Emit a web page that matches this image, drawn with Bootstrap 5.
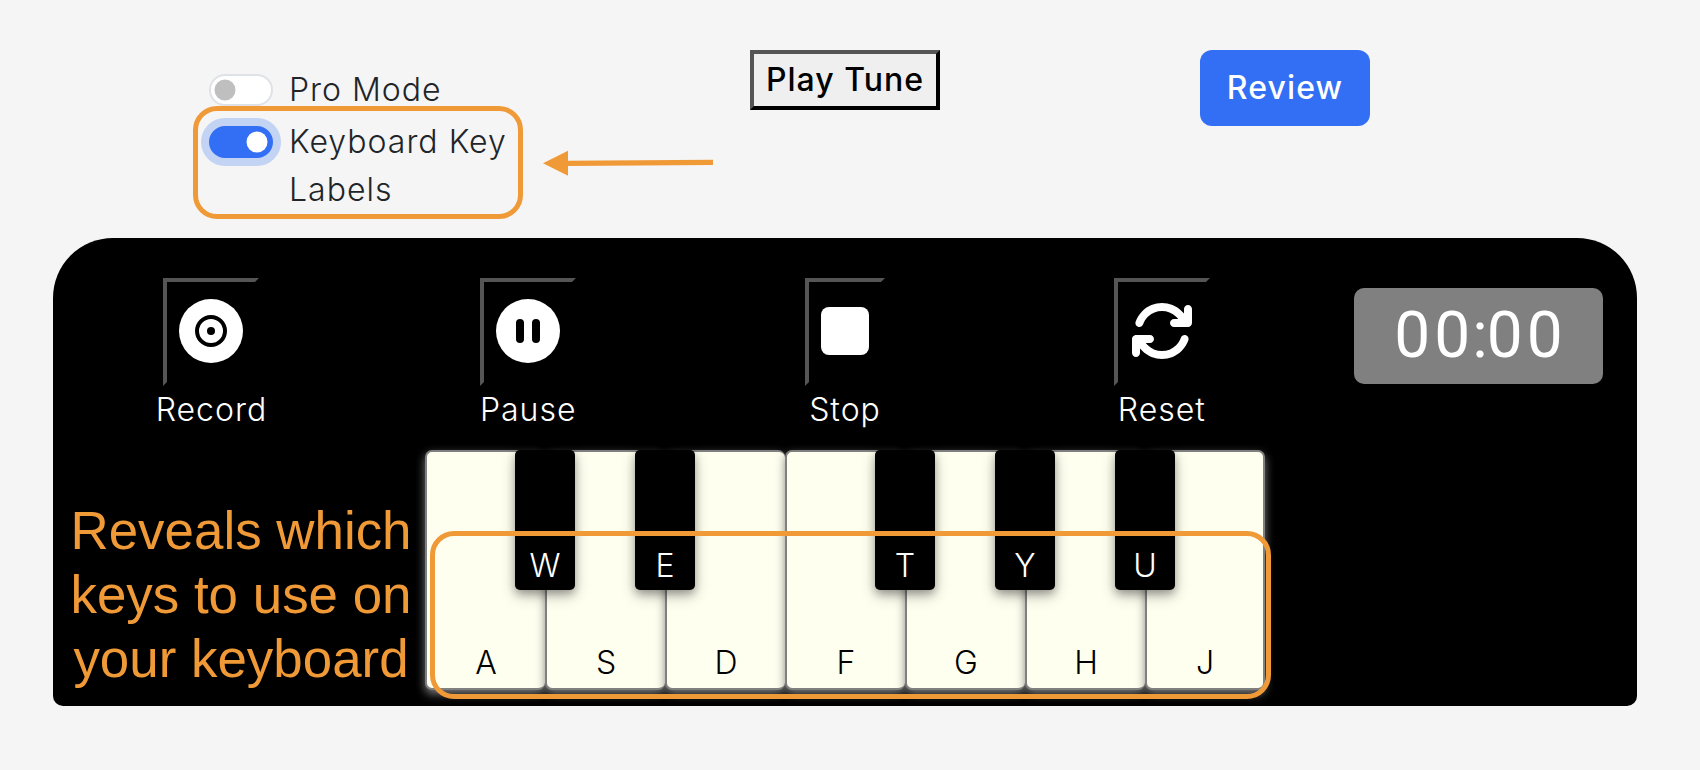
<!DOCTYPE html>
<html lang="en">
<head>
<meta charset="utf-8">
<title>Piano</title>
<link href="https://cdn.jsdelivr.net/npm/bootstrap@5.3.0/dist/css/bootstrap.min.css" rel="stylesheet">
<style>
body{background:#f5f5f5;font-family:Inter,"Noto Sans",sans-serif;font-size:32px;font-weight:300;line-height:48px;color:#212529;overflow:hidden}
.stage{width:1700px;height:770px;padding:50px 63px 0 53px}
.topbar{height:188px}
.options{width:320px;margin-left:156px;padding-top:16px}
.options .form-check{min-height:48px;margin-bottom:4px}
.options .form-check-label{white-space:nowrap;letter-spacing:1px}
.form-switch .form-check-input{border-width:2px}
.form-switch .form-check-input:not(:checked){border-color:#dee2e6}
.form-switch .form-check-input:checked{background-color:#326ff5;border-color:#326ff5}
.form-switch .form-check-input.ring{box-shadow:0 0 0 8px rgba(49,110,245,.25)}
.raised{border:4px solid;border-color:#555 #000 #000 #555;padding:0}
.tune{width:190px;height:60px;margin-left:221px;background:#efefef;color:#000;font-weight:500;line-height:46px;letter-spacing:1px}
.review{width:170px;height:76px;margin-left:260px;border-radius:12px;background:#326ff5;color:#fff;font-size:32px;font-weight:500;line-height:48px;border:0;letter-spacing:1.1px}
.device{width:1584px;height:468px;background:#000;color:#fff;border-radius:60px 60px 10px 10px;padding-top:40px}
.ctl{width:20%}
.ctl .raised{width:96px;height:108px;background:#000}
.ctl .raised svg{display:block;margin:-2px auto 0}
.ctl .raised.slim{width:80px}
.ctl .cap{line-height:48px;letter-spacing:1px}
.clock{width:249px;height:96px;margin-top:10px;background:#808080;border-radius:10px;font-family:Roboto,sans-serif;font-size:64px;font-weight:400;line-height:95px}
.clock span{display:inline-block;width:40px;text-align:center}
.clock .sep{width:12.5px}
.keys{width:840px;height:240px;margin:16px 0 0 372px}
.white{width:120px;height:240px;background:#fffff0;border:2px solid #808080;border-right-width:0;border-radius:7px;color:#000;font-weight:260;padding-bottom:1px;box-shadow:0 4px 10px rgba(128,128,128,.95)}
.white:last-child{border-right-width:2px}
.black{top:-2px;right:-30px;width:60px;height:140px;z-index:2;background:#000;color:#fff;border-radius:5px;box-shadow:0 4px 8px rgba(0,0,0,.3),0 6px 16px rgba(0,0,0,.2)}
.frame{border:5px solid #f09937;border-radius:24px;z-index:5}
.note{left:53px;top:499px;width:376px;color:#f09937;font:400 52.9px/64px "Liberation Sans",Arial,sans-serif;text-align:center}
</style>
</head>
<body>
<main class="stage position-relative">
  <header class="topbar d-flex align-items-start">
    <div class="options">
      <div class="form-check form-switch"><input class="form-check-input" type="checkbox" id="pro"><label class="form-check-label" for="pro">Pro Mode</label></div>
      <div class="form-check form-switch"><input class="form-check-input ring" type="checkbox" id="lab" checked><label class="form-check-label" for="lab">Keyboard Key<br>Labels</label></div>
    </div>
    <button class="raised tune">Play Tune</button>
    <button class="btn review">Review</button>
  </header>
  <section class="device">
    <div class="d-flex align-items-start">
      <div class="ctl d-flex flex-column align-items-center"><button class="raised"><svg width="64" height="64" viewBox="0 0 64 64"><circle cx="32" cy="32" r="32" fill="#fff"/><circle cx="32" cy="32" r="14" fill="none" stroke="#000" stroke-width="4"/><circle cx="32" cy="32" r="4"/></svg></button><span class="cap">Record</span></div>
      <div class="ctl d-flex flex-column align-items-center"><button class="raised"><svg width="64" height="64" viewBox="0 0 64 64"><circle cx="32" cy="32" r="32" fill="#fff"/><rect x="20" y="20" width="8" height="24" rx="4"/><rect x="36" y="20" width="8" height="24" rx="4"/></svg></button><span class="cap">Pause</span></div>
      <div class="ctl d-flex flex-column align-items-center"><button class="raised slim"><svg width="48" height="64" viewBox="0 0 48 64"><rect y="8" width="48" height="48" rx="8" fill="#fff"/></svg></button><span class="cap">Stop</span></div>
      <div class="ctl d-flex flex-column align-items-center"><button class="raised"><svg width="64" height="64" viewBox="0 0 512 512"><path fill="#fff" d="M105.1 202.6c7.7-21.8 20.2-42.3 37.8-59.8c62.5-62.5 163.8-62.5 226.3 0L386.3 160H352c-17.7 0-32 14.3-32 32s14.3 32 32 32H463.9c17.7 0 32-14.3 32-32V80c0-17.7-14.3-32-32-32s-32 14.3-32 32v35.2L414.4 97.6c-87.5-87.5-229.3-87.5-316.8 0C73.2 122 55.6 150.7 44.8 181.4c-5.9 16.7 2.9 34.9 19.5 40.8s34.9-2.9 40.8-19.5zM39 289.3c-5 1.5-9.8 4.2-13.7 8.2c-4 4-6.7 8.8-8.1 14c-.3 1.2-.6 2.5-.8 3.8c-.3 1.7-.4 3.4-.4 5.1V432c0 17.7 14.3 32 32 32s32-14.3 32-32V396.9l17.6 17.5c87.5 87.4 229.3 87.4 316.7 0c24.4-24.4 42.1-53.1 52.9-83.7c5.9-16.7-2.9-34.9-19.5-40.8s-34.9 2.9-40.8 19.5c-7.7 21.8-20.2 42.3-37.8 59.8c-62.5 62.5-163.8 62.5-226.3 0l-.1-.1L125.6 352H160c17.7 0 32-14.3 32-32s-14.3-32-32-32H48.4c-1.6 0-3.2 .1-4.8 .3s-3.1 .5-4.6 1z"/></svg></button><span class="cap">Reset</span></div>
      <div class="ctl d-flex justify-content-center"><div class="clock d-flex justify-content-center"><span>0</span><span>0</span><span class="sep">:</span><span>0</span><span>0</span></div></div>
    </div>
    <div class="keys d-flex">
      <div class="white position-relative d-flex align-items-end justify-content-center">A<div class="black position-absolute d-flex align-items-end justify-content-center">W</div></div>
      <div class="white position-relative d-flex align-items-end justify-content-center">S<div class="black position-absolute d-flex align-items-end justify-content-center">E</div></div>
      <div class="white position-relative d-flex align-items-end justify-content-center">D</div>
      <div class="white position-relative d-flex align-items-end justify-content-center">F<div class="black position-absolute d-flex align-items-end justify-content-center">T</div></div>
      <div class="white position-relative d-flex align-items-end justify-content-center">G<div class="black position-absolute d-flex align-items-end justify-content-center">Y</div></div>
      <div class="white position-relative d-flex align-items-end justify-content-center">H<div class="black position-absolute d-flex align-items-end justify-content-center">U</div></div>
      <div class="white position-relative d-flex align-items-end justify-content-center">J</div>
    </div>
  </section>
  <div class="frame position-absolute" style="left:193px;top:106px;width:330px;height:113px"></div>
  <div class="frame position-absolute" style="left:430px;top:531px;width:841px;height:168px"></div>
  <svg class="position-absolute" style="left:543px;top:150px" width="172" height="27" viewBox="0 0 172 27"><path d="M0 13.3 25 .7v25z" fill="#f09937"/><path d="M24 13.3 170 12.3" stroke="#f09937" stroke-width="5.3"/></svg>
  <div class="note position-absolute">Reveals which<br>keys to use on<br>your keyboard</div>
</main>
<script src="https://cdn.jsdelivr.net/npm/bootstrap@5.3.0/dist/js/bootstrap.bundle.min.js"></script>
</body>
</html>
